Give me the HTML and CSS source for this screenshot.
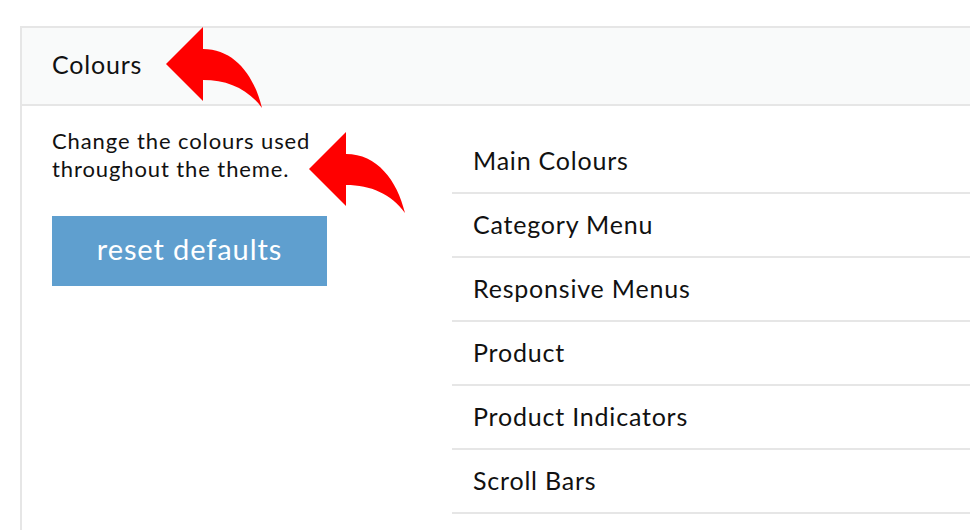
FILE: index.html
```html
<!DOCTYPE html>
<html>
<head>
<meta charset="utf-8">
<link rel="stylesheet" href="styles.css">
</head>
<body>
<div class="panel">
  <div class="panel-header">Colours</div>
  <div class="panel-body">
    <div class="intro">
      <p class="desc">Change the colours used<br>throughout the theme.</p>
      <button class="reset">reset defaults</button>
    </div>
    <ul class="menu">
      <li>Main Colours</li>
      <li>Category Menu</li>
      <li>Responsive Menus</li>
      <li>Product</li>
      <li>Product Indicators</li>
      <li>Scroll Bars</li>
    </ul>
  </div>
</div>
<svg class="arrow arrow-one" width="98" height="82" viewBox="0 0 98 82"><path d="M0,37 L37,0 L37,22 C68,22 88,48 96,81 C82,62 62,53 37,53 L37,74 Z" fill="#ff0000"/></svg>
<svg class="arrow arrow-two" width="98" height="82" viewBox="0 0 98 82"><path d="M0,37 L37,0 L37,22 C68,22 88,48 96,81 C82,62 62,53 37,53 L37,74 Z" fill="#ff0000"/></svg>
</body>
</html>
```
FILE: styles.css
```css
html, body {
  margin: 0;
  padding: 0;
  background: #ffffff;
  overflow: hidden;
  height: 530px;
}
body {
  font-family: Lato, "Open Sans", "Liberation Sans", sans-serif;
  color: #111111;
  position: relative;
}
.panel {
  margin: 26px 0 0 20px;
  width: 1000px;
  height: 520px;
  border-top: 2px solid #e6e6e6;
  border-left: 2px solid #e6e6e6;
}
.panel-header {
  box-sizing: border-box;
  height: 78px;
  background: #f9fafa;
  border-bottom: 2px solid #e6e6e6;
  display: flex;
  align-items: center;
  padding: 0 0 4px 30px;
  font-size: 25px;
  letter-spacing: 0.8px;
}
.panel-body {
  display: flex;
}
.intro {
  width: 400px;
  padding-left: 30px;
  padding-top: 21px;
}
.desc {
  margin: 0;
  font-size: 22px;
  line-height: 28px;
  letter-spacing: 0.9px;
}
.reset {
  margin-top: 33px;
  width: 275px;
  height: 70px;
  border: none;
  background: #5f9fcf;
  color: #ffffff;
  font-family: inherit;
  font-size: 29px;
  letter-spacing: 0.9px;
  padding: 0 0 6px 0;
}
.menu {
  flex: 1;
  list-style: none;
  margin: 24px 0 0 0;
  padding: 0;
}
.menu li {
  height: 62px;
  border-bottom: 2px solid #e6e6e6;
  display: flex;
  align-items: center;
  padding: 0 0 2px 21px;
  box-sizing: content-box;
  height: 60px;
  font-size: 25px;
  letter-spacing: 0.8px;
}
.arrow {
  position: absolute;
}
.arrow-one {
  left: 166px;
  top: 27px;
}
.arrow-two {
  left: 309px;
  top: 132px;
}
```
